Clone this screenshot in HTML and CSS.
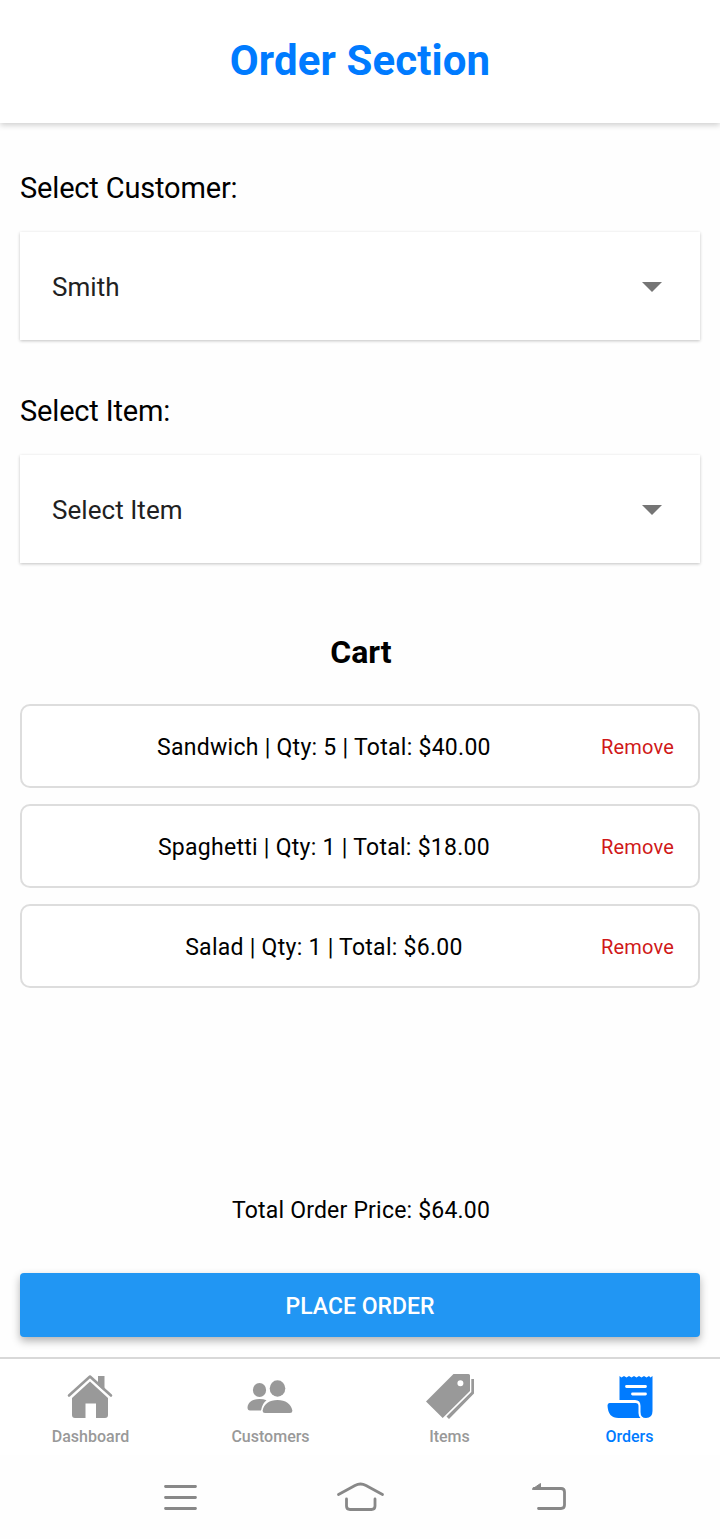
FILE: index.html
```html
<!DOCTYPE html>
<html lang="en">
<head>
<meta charset="utf-8">
<title>Order Section</title>
<link rel="stylesheet" href="styles.css">
</head>
<body>
<div class="app">
  <header class="header"><h1 class="title">Order Section</h1></header>
  <main class="content">
    <label class="label">Select Customer:</label>
    <div class="picker"><span class="value">Smith</span><svg class="caret" viewBox="0 0 20 10"><path d="M0 0h20L10 10z"/></svg></div>
    <label class="label">Select Item:</label>
    <div class="picker"><span class="value">Select Item</span><svg class="caret" viewBox="0 0 20 10"><path d="M0 0h20L10 10z"/></svg></div>
    <h2 class="cart-title">Cart</h2>
    <ul class="cart">
      <li class="cart-item"><span class="cart-text">Sandwich | Qty: 5 | Total: $40.00</span><span class="remove">Remove</span></li>
      <li class="cart-item"><span class="cart-text">Spaghetti | Qty: 1 | Total: $18.00</span><span class="remove">Remove</span></li>
      <li class="cart-item"><span class="cart-text">Salad | Qty: 1 | Total: $6.00</span><span class="remove">Remove</span></li>
    </ul>
    <p class="total">Total Order Price: $64.00</p>
    <button class="place">PLACE ORDER</button>
  </main>
  <nav class="tabs">
    <a class="tab">
      <svg class="tab-icon" viewBox="0 0 48 48"><path d="M3 22.500 24 3.500l21 19" fill="none" stroke="currentColor" stroke-width="2.600" stroke-linecap="round" stroke-linejoin="round"/><path d="M32 3h6.500v15L32 12zM24 8.500 42 25v17q0 3-3 3h-9V30.500H19.500V45H9q-3 0-3-3V25z"/></svg>
      <span class="tab-label">Dashboard</span>
    </a>
    <a class="tab">
      <svg class="tab-icon" viewBox="0 0 48 48"><ellipse cx="13.500" cy="17" rx="6.600" ry="7"/><ellipse cx="31.500" cy="15.500" rx="7.800" ry="8.300"/><path d="M1.500 34.500C2 29 7 26 13.500 26q4 0 7 1.300Q16.500 30 15 37.500H4q-2.500 0-2.500-3zM31.500 27c8 0 13.500 4 14.800 10.200q.4 2.800-2.300 2.800H19q-2.700 0-2.300-2.800C18 31 23.500 27 31.500 27z"/></svg>
      <span class="tab-label">Customers</span>
    </a>
    <a class="tab">
      <svg class="tab-icon" viewBox="0 0 48 48"><path fill-rule="evenodd" d="M27.500 1H42.500q1.500 0 1.500 1.500V18L16.700 45 0 28.500zM34.400 7.200a3 3 0 1 0 0 6 3 3 0 0 0 0-6z"/><path d="M45.300 6h2.700v14.500L23 46l-2.500-2.500L45.300 19z"/></svg>
      <span class="tab-label shifted">Items</span>
    </a>
    <a class="tab active">
      <svg class="tab-icon" viewBox="0 0 48 48"><path d="M13.500 3l2 1.500L18 3l2.500 1.500L23 3l2.500 1.500L28 3l2.500 1.500L33 3l2.500 1.500L38 3l2.500 1.500L43 3l1.500 1.500L46.500 3V38q0 7-6.500 7-5.500 0-5.500-6v-6q0-6-5.500-6H13.500z"/><path d="M3.500 30h26q3 0 3 3v7q0 3.500 2 5H12.500Q2 45 1.500 32.500q0-2.500 2-2.500z"/><path d="M20.500 13.500h19M26.500 21h13" stroke="#fff" stroke-width="2.800" stroke-linecap="round"/></svg>
      <span class="tab-label shifted">Orders</span>
    </a>
  </nav>
  <footer class="system">
    <svg class="sys-icon" viewBox="0 0 50 36"><path d="M10.500 6.500h30M10.500 17.500h30M10.500 28.500h30"/></svg>
    <svg class="sys-icon" viewBox="0 0 50 36"><path d="M3.500 14.500 20 5.500q5.500-3 11 0l16.500 9M11.500 19v7q0 3.500 3.500 3.500h21.500q3.500 0 3.500-3.500v-7"/></svg>
    <svg class="sys-icon" viewBox="0 0 50 36"><path d="M13.500 28.500H36q3.500 0 3.500-3.500V12q0-3.500-3.500-3.500H9"/><path class="filled" d="m7.500 9 8-5.500V9z"/></svg>
  </footer>
</div>
</body>
</html>
```
FILE: styles.css
```css
* { box-sizing: border-box; }
body { margin: 0; background: #fefefe; color: #000; font-family: Roboto, sans-serif; }
.app { width: 720px; height: 1539px; display: flex; flex-direction: column; overflow: hidden; }
.header { height: 123px; flex: none; display: flex; justify-content: center; background: #fff; box-shadow: 0 2px 6px rgba(0,0,0,.2); position: relative; z-index: 1; }
.title { margin: 36px 0 0; font-size: 42px; line-height: 49px; font-weight: 700; color: #007bff; letter-spacing: .1px; }
.content { height: 1234px; flex: none; display: flex; flex-direction: column; padding: 47px 20px 20px; background: #fefefe; }
.label { height: 36px; line-height: 36px; font-size: 29px; letter-spacing: -.17px; }
.picker { height: 108px; flex: none; margin: 26px 0 53px; padding: 2px 38px 0 32px; display: flex; align-items: center; justify-content: space-between; background: #fff; box-shadow: 0 1px 3px rgba(0,0,0,.24); }
.value { font-size: 26px; color: #212121; letter-spacing: .05px; }
.caret { width: 20px; height: 10px; fill: #757575; }
.cart-title { margin: 17px 0 33px; padding-left: 2px; font-size: 32px; line-height: 38px; font-weight: 700; text-align: center; }
.cart { margin: 0; padding: 0; list-style: none; display: flex; flex-direction: column; gap: 16px; flex: 1; }
.cart-item { height: 84px; display: flex; align-items: center; padding: 2px 24px 0 25px; border: 2px solid #ddd; border-radius: 10px; background: #fff; }
.cart-text { flex: 1; text-align: center; font-size: 23px; letter-spacing: .27px; }
.remove { font-size: 20px; color: #d01818; letter-spacing: .2px; }
.total { margin: 0 0 46px; padding-left: 2px; font-size: 23px; line-height: 32px; text-align: center; letter-spacing: .2px; }
.place { height: 64px; flex: none; border: 0; border-radius: 4px; background: #2196f3; color: #fff; font: 500 23px/60px Roboto, sans-serif; padding: 4px 0 0; box-shadow: 0 4px 9px rgba(0,0,0,.3); }
.tabs { height: 98px; flex: none; display: grid; grid-template-columns: repeat(4, 1fr); border-top: 2px solid #d8d8d8; background: #fff; position: relative; }
.tab { display: flex; flex-direction: column; align-items: center; padding-top: 14px; color: #999; }
.tab.active { color: #007bff; }
.tab-icon { width: 48px; height: 48px; fill: currentColor; overflow: visible; }
.tab-label { margin-top: 6px; padding-left: 1px; font-size: 16px; line-height: 20px; font-weight: 500; }
.tab-label.shifted { padding: 0 1px 0 0; }
.system { flex: 1; display: grid; grid-template-columns: 180px 190px 50px; padding: 25px 0 0 155px; }
.sys-icon { width: 50px; height: 36px; fill: none; stroke: #888; stroke-width: 2.800; stroke-linecap: round; stroke-linejoin: round; }
.filled { fill: #888; stroke-width: 1; }
```
